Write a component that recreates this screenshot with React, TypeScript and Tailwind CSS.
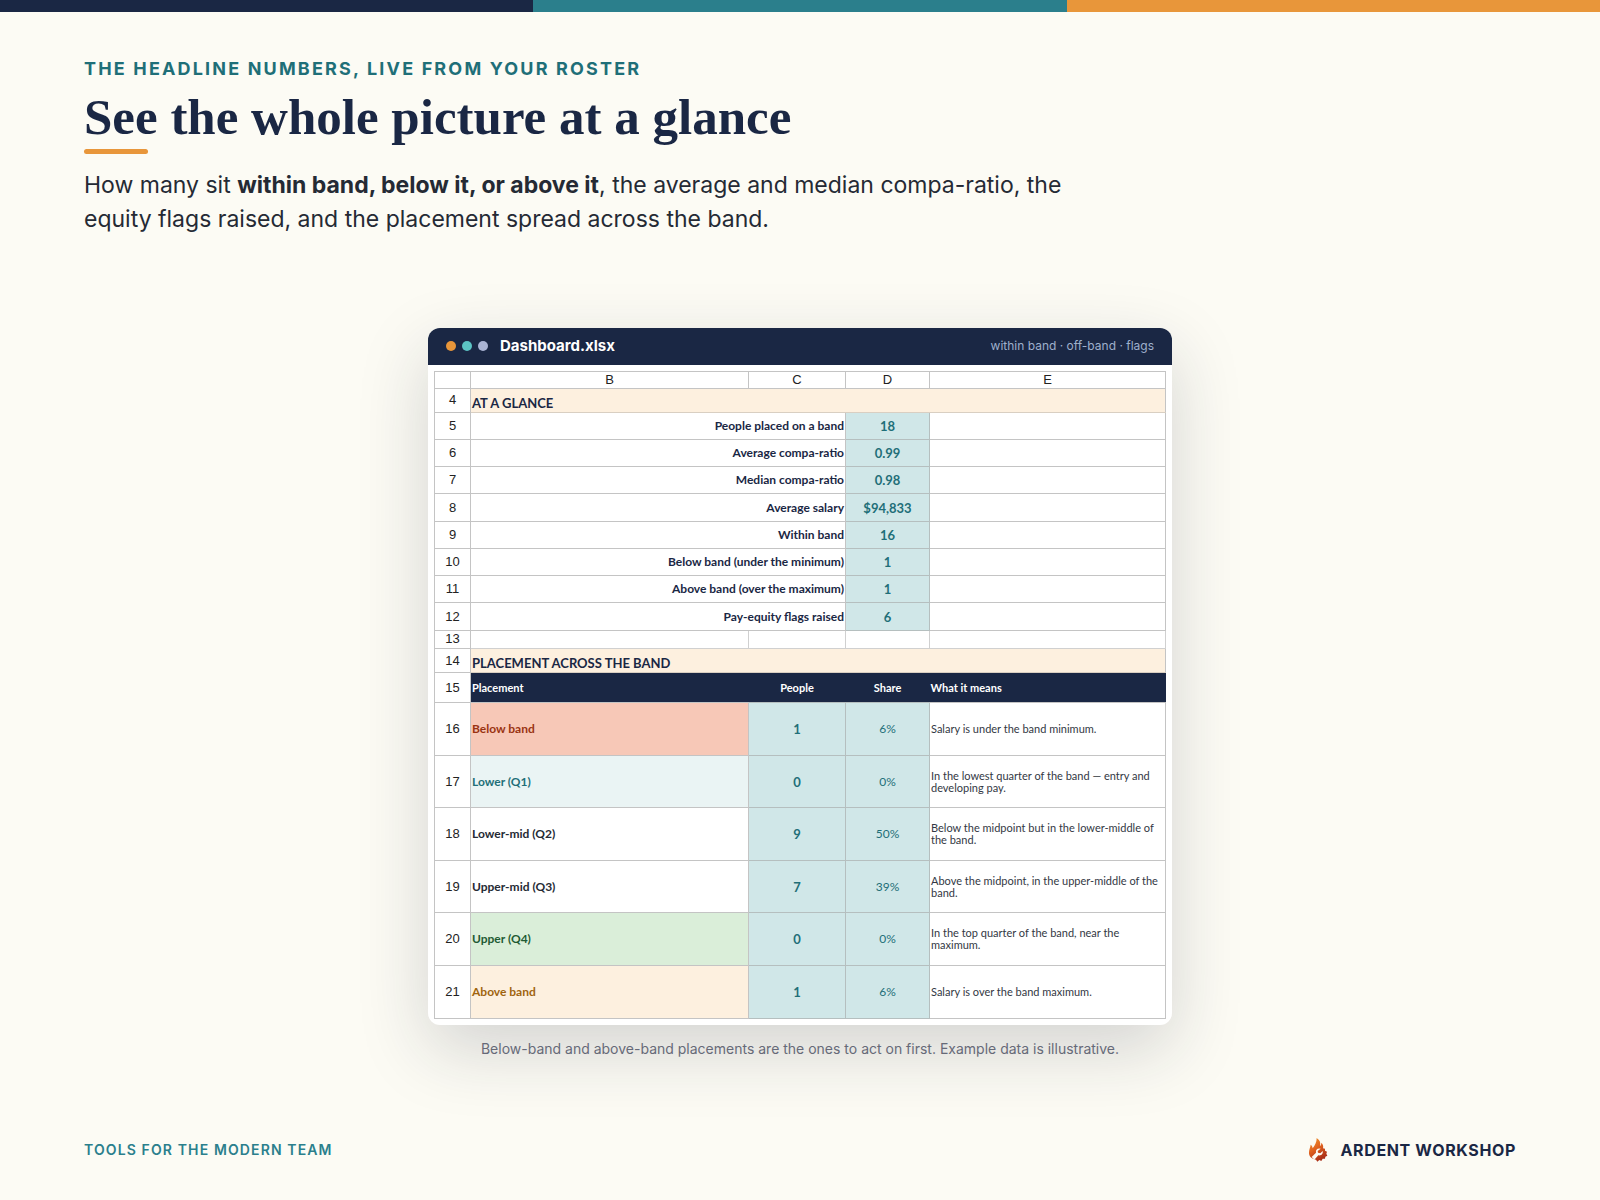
import React from "react";

interface Metric {
  row: number;
  label: string;
  value: string;
}

interface Placement {
  row: number;
  name: string;
  people: number;
  share: string;
  meaning: string;
  tone: string;
}

const metrics: Metric[] = [
  { row: 5, label: "People placed on a band", value: "18" },
  { row: 6, label: "Average compa-ratio", value: "0.99" },
  { row: 7, label: "Median compa-ratio", value: "0.98" },
  { row: 8, label: "Average salary", value: "$94,833" },
  { row: 9, label: "Within band", value: "16" },
  { row: 10, label: "Below band (under the minimum)", value: "1" },
  { row: 11, label: "Above band (over the maximum)", value: "1" },
  { row: 12, label: "Pay-equity flags raised", value: "6" },
];

const placements: Placement[] = [
  {
    row: 16,
    name: "Below band",
    people: 1,
    share: "6%",
    meaning: "Salary is under the band minimum.",
    tone: "bg-[#f7c8b7] text-[#9a3412]",
  },
  {
    row: 17,
    name: "Lower (Q1)",
    people: 0,
    share: "0%",
    meaning: "In the lowest quarter of the band — entry and developing pay.",
    tone: "bg-[#eaf4f4] text-[#1f6f78]",
  },
  {
    row: 18,
    name: "Lower-mid (Q2)",
    people: 9,
    share: "50%",
    meaning: "Below the midpoint but in the lower-middle of the band.",
    tone: "bg-white text-[#252a34]",
  },
  {
    row: 19,
    name: "Upper-mid (Q3)",
    people: 7,
    share: "39%",
    meaning: "Above the midpoint, in the upper-middle of the band.",
    tone: "bg-white text-[#252a34]",
  },
  {
    row: 20,
    name: "Upper (Q4)",
    people: 0,
    share: "0%",
    meaning: "In the top quarter of the band, near the maximum.",
    tone: "bg-[#daeed9] text-[#1f5b34]",
  },
  {
    row: 21,
    name: "Above band",
    people: 1,
    share: "6%",
    meaning: "Salary is over the band maximum.",
    tone: "bg-[#fdf0df] text-[#a0640f]",
  },
];

function RowNumber({ n }: { n: number | string }) {
  return (
    <th
      scope="row"
      className="border border-[#c4c4c4] bg-white p-0 text-center font-['Liberation_Sans',sans-serif] text-[13px] font-normal text-[#222222]"
    >
      {n}
    </th>
  );
}

function SectionRow({ n, title }: { n: number; title: string }) {
  return (
    <tr className="h-6">
      <RowNumber n={n} />
      <td
        colSpan={4}
        className="border border-[#d9cfc2] border-r-[#c4c4c4] bg-[#fdf0df] px-px py-0 align-bottom text-[13px] leading-[18px] font-bold text-[#1a2744]"
      >
        {title}
      </td>
    </tr>
  );
}

function Sheet() {
  return (
    <table className="h-[648px] w-full table-fixed border-collapse font-['Lato',sans-serif] leading-4">
      <colgroup>
        <col className="w-9" />
        <col className="w-[278px]" />
        <col className="w-[97px]" />
        <col className="w-[84px]" />
        <col />
      </colgroup>
      <thead>
        <tr className="h-4 font-['Liberation_Sans',sans-serif] text-[13px] text-[#222222]">
          {["", "B", "C", "D", "E"].map((col) => (
            <th key={col} className="border border-[#c4c4c4] p-0 font-normal">
              {col}
            </th>
          ))}
        </tr>
      </thead>
      <tbody>
        <SectionRow n={4} title="AT A GLANCE" />
        {metrics.map((m) => (
          <tr key={m.row} className="h-[27px]">
            <RowNumber n={m.row} />
            <td
              colSpan={2}
              className="border border-[#c4c4c4] px-px py-0 text-right text-xs font-bold text-[#1a2744]"
            >
              {m.label}
            </td>
            <td className="border border-[#b5bfbf] bg-[#d0e7e8] p-0 text-center text-[13px] font-bold text-[#1f6f78]">
              {m.value}
            </td>
            <td className="border border-[#c4c4c4] p-0" />
          </tr>
        ))}
        <tr className="h-[18px]">
          <RowNumber n={13} />
          <td className="border border-[#d0d0d0] p-0" />
          <td className="border border-[#d0d0d0] p-0" />
          <td className="border border-[#d0d0d0] p-0" />
          <td className="border border-[#d0d0d0] p-0" />
        </tr>
        <SectionRow n={14} title="PLACEMENT ACROSS THE BAND" />
        <tr className="h-[30px] text-[11px] text-white">
          <RowNumber n={15} />
          <th className="bg-[#1a2744] px-px py-0 text-left font-bold">Placement</th>
          <th className="bg-[#1a2744] p-0 font-bold">People</th>
          <th className="bg-[#1a2744] p-0 font-bold">Share</th>
          <th className="bg-[#1a2744] px-px py-0 text-left font-bold">What it means</th>
        </tr>
        {placements.map((p) => (
          <tr key={p.row} className="h-[52px]">
            <RowNumber n={p.row} />
            <td className={`border border-[#c4c4c4] px-px py-0 text-xs font-bold ${p.tone}`}>
              {p.name}
            </td>
            <td className="border border-[#b5bfbf] bg-[#d0e7e8] p-0 text-center text-[13px] font-bold text-[#1f6f78]">
              {p.people}
            </td>
            <td className="border border-[#b5bfbf] bg-[#d0e7e8] p-0 text-center text-xs text-[#1f6f78]">
              {p.share}
            </td>
            <td className="border border-[#c4c4c4] px-px py-0 text-[11px] leading-3 text-[#333844]">
              {p.meaning}
            </td>
          </tr>
        ))}
      </tbody>
    </table>
  );
}

function FlameLogo() {
  return (
    <svg viewBox="0 0 56 72" className="h-6 w-5" aria-hidden="true">
      <defs>
        <linearGradient id="flame" x1="0" y1="0" x2="0.5" y2="1">
          <stop offset="0" stopColor="#f29a2e" />
          <stop offset="0.5" stopColor="#e0621f" />
          <stop offset="1" stopColor="#a82d17" />
        </linearGradient>
      </defs>
      <path
        fill="url(#flame)"
        d="M24 0C34 7 36 14 34 24C37 22 38 18 38 14C43 19 45 25 43 31L49 32L49 38L55 41L53 47L56 53L50 56L49 62L42 62L38 69L32 66L26 71L22 65C9 63 0 55 1 43C1 34 5 29 6 20C10 23 12 27 12 31C19 21 24 13 24 0Z"
      />
      {/* wrench */}
      <path
        fill="#fcfbf4"
        d="M36 32C27 29 20 35 22 44L9 57L17 65L29 52C38 54 44 47 42 39L35 46L28 44L27 39Z"
      />
    </svg>
  );
}

export default function App() {
  return (
    <div className="flex min-h-screen flex-col bg-[#fcfbf4] font-['Inter',sans-serif]">
      <div className="grid h-3 grid-cols-3">
        <div className="bg-[#1a2744]" />
        <div className="bg-[#2b7f8c]" />
        <div className="bg-[#e8963a]" />
      </div>

      <header className="px-[84px] pt-[45px]">
        <p className="text-lg leading-6 font-bold tracking-[0.12em] text-[#1f6f78]">
          THE HEADLINE NUMBERS, LIVE FROM YOUR ROSTER
        </p>
        <h1 className="mt-2 font-['Liberation_Serif',serif] text-[51px] leading-[56px] font-bold text-[#1a2744]">
          See the whole picture at a glance
        </h1>
        <div className="mt-1 h-[5px] w-16 rounded-full bg-[#e8963a]" />
        <p className="mt-3.5 max-w-[1000px] text-[23px] leading-[34px] text-[#252a34]">
          How many sit <strong className="font-bold">within band, below it, or above it</strong>, the
          average and median compa-ratio, the equity flags raised, and the placement spread across
          the band.
        </p>
      </header>

      <main className="flex flex-1 flex-col items-center justify-center px-[84px] pt-3.5">
        <section className="w-full max-w-[744px] overflow-hidden rounded-xl bg-white shadow-[0_24px_70px_rgba(26,32,56,0.18)]">
          <div className="flex h-[37px] items-center bg-[#1a2744] px-[18px]">
            <div className="flex gap-1.5">
              <span className="size-2.5 rounded-full bg-[#e8963a]" />
              <span className="size-2.5 rounded-full bg-[#5cc4c4]" />
              <span className="size-2.5 rounded-full bg-[#aab4d4]" />
            </div>
            <span className="ml-3 text-[15px] font-bold text-white">Dashboard.xlsx</span>
            <span className="ml-auto text-xs text-[#9fb0cc]">within band · off-band · flags</span>
          </div>
          <div className="p-1.5">
            <Sheet />
          </div>
        </section>
        <p className="mt-3 text-sm leading-6 text-[#666a78]">
          Below-band and above-band placements are the ones to act on first. Example data is
          illustrative.
        </p>
      </main>

      <footer className="flex items-center justify-between px-[84px] pb-[38px]">
        <span className="text-sm font-semibold tracking-[0.08em] text-[#2b7f8c]">
          TOOLS FOR THE MODERN TEAM
        </span>
        <div className="flex items-center gap-3">
          <FlameLogo />
          <span className="text-base font-bold tracking-[0.04em] text-[#1a2744]">
            ARDENT WORKSHOP
          </span>
        </div>
      </footer>
    </div>
  );
}
